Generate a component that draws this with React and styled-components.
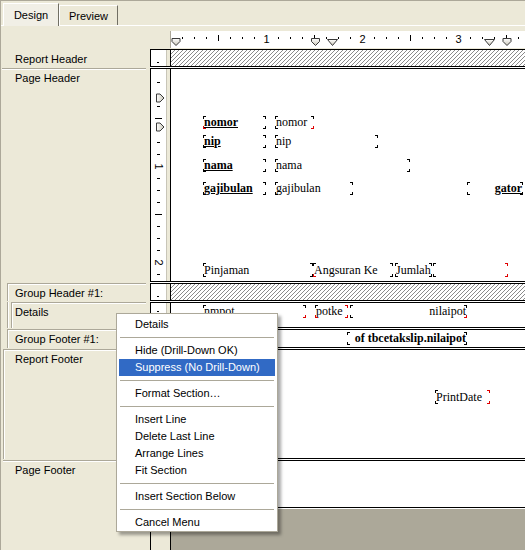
import React from 'react';
import styled, { createGlobalStyle } from 'styled-components';

const BEIGE = '#ece9d8';
const EDGE = '#aca899';
const DARK = '#716f64';

const GlobalStyle = createGlobalStyle`
  html, body { margin: 0; padding: 0; background: ${BEIGE}; }
  body { font-family: "Liberation Sans", Arial, sans-serif; font-size: 11px; color: #000; }
`;

/** window + tabs **/
const Window = styled.div`
  position: relative;
  box-sizing: border-box;
  width: 525px;
  height: 550px;
  overflow: hidden;
  background: ${BEIGE};
  border-left: 1px solid ${EDGE};
  display: flex;
  flex-direction: column;
`;

const TabStrip = styled.div`
  display: flex;
  align-items: flex-end;
  height: 24px;
  padding-left: 2px;
  border-top: 1px solid ${EDGE};
  border-bottom: 1px solid #fff;
`;

const Tab = styled.div`
  box-sizing: border-box;
  width: ${({ $w }) => $w}px;
  height: ${({ $active }) => ($active ? 23 : 20)}px;
  margin-bottom: ${({ $active }) => ($active ? -1 : 0)}px;
  display: flex;
  align-items: center;
  justify-content: center;
  background: ${({ $active }) => ($active ? '#f1efe6' : BEIGE)};
  border-left: 1px solid #fff;
  border-top: 1px solid #fff;
  border-right: 1px solid ${DARK};
  position: relative;
  z-index: 1;
`;

/** designer **/
const Designer = styled.div`
  flex: 1;
  display: flex;
  flex-direction: column;
`;

const RulerRow = styled.div`
  display: flex;
  height: 23px;
  padding-top: 5px;
  box-sizing: border-box;
`;

const Spacer = styled.div`
  flex: none;
  width: ${({ $w }) => $w}px;
`;

const HRuler = styled.div`
  flex: 1;
  height: 17px;
  background: #fff;
  border-left: 1px solid ${EDGE};
  svg { display: block; }
`;

const Row = styled.div`
  display: flex;
  flex: none;
  height: ${({ $h }) => $h}px;
  margin-top: ${({ $first }) => ($first ? 0 : 1)}px;
`;

const Label = styled.div`
  flex: none;
  width: 149px;
  display: flex;
  flex-direction: column;
`;

const LabelBox = styled.div`
  flex: 1;
  margin-left: ${({ $ml }) => $ml || 0}px;
  margin-right: ${({ $mr }) => ($mr === undefined ? 4 : $mr)}px;
  padding-left: ${({ $pl }) => $pl || 0}px;
  padding-top: ${({ $pt }) => ($pt === undefined ? 3 : $pt)}px;
  border-top: ${({ $top }) => ($top ? `1px solid ${EDGE}` : 'none')};
  border-left: ${({ $left }) => ($left ? `1px solid ${EDGE}` : 'none')};
  box-shadow: ${({ $top, $left }) =>
    [$top && 'inset 0 1px 0 #fff', $left && 'inset 1px 0 0 #fff'].filter(Boolean).join(', ') || 'none'};
  line-height: 13px;
  white-space: nowrap;
  display: flex;
  flex-direction: column;
`;

const Band = styled.div`
  flex: 1;
  display: flex;
  box-sizing: border-box;
  border: 1px solid #000;
  border-right: none;
  box-shadow: ${({ $first }) => ($first ? 'none' : '0 -1px 0 #fff')};
`;

const RulerBox = styled.div`
  flex: none;
  width: 15px;
  background: #fff;
  border-right: 1px solid #c8c5b8;
  position: relative;
  svg { display: block; }
  &::after {
    content: '';
    display: ${({ $markY }) => ($markY === undefined ? 'none' : 'block')};
    position: absolute;
    left: 6px;
    top: ${({ $markY }) => $markY}px;
    width: 2px;
    height: 1px;
    background: #000;
  }
`;

const Gap = styled.div`
  flex: none;
  width: 3px;
  background: ${BEIGE};
`;

const Canvas = styled.div`
  flex: 1;
  position: relative;
  overflow: hidden;
  border-left: 1px solid #000;
  background: ${({ $hatch }) =>
    $hatch ? 'linear-gradient(135deg, #fff 0 38%, #8a8a8a 38% 62%, #fff 62% 100%)' : '#fff'};
  background-size: 4px 4px;
`;

const BottomFill = styled.div`
  flex: 1;
  display: flex;
  margin-top: 1px;
`;

const BottomBand = styled.div`
  flex: 1;
  display: flex;
  border-left: 1px solid #000;
  box-shadow: 0 -1px 0 #fff;
`;

const GrayArea = styled.div`
  flex: 1;
  background: ${EDGE};
  border-left: 1px solid #000;
`;

/** report fields **/
const Field = styled.div`
  position: absolute;
  left: ${({ $x }) => $x}px;
  top: ${({ $y }) => $y}px;
  width: ${({ $w }) => $w}px;
  height: ${({ $h }) => $h}px;
  overflow: hidden;
  display: flex;
  justify-content: ${({ $right }) => ($right ? 'flex-end' : 'flex-start')};
  font-family: "Liberation Serif", "Times New Roman", serif;
  font-size: 12px;
  line-height: ${({ $h }) => $h}px;
  font-weight: ${({ $bold }) => ($bold ? 700 : 400)};
  text-decoration: ${({ $ul }) => ($ul ? 'underline' : 'none')};
  white-space: nowrap;
`;

const FieldText = styled.span`
  flex: none;
  padding: 0 1px;
`;

const cornerRules = {
  tl: 'top:0;left:0;border-top-width:1px;border-left-width:1px;',
  tr: 'top:0;right:0;border-top-width:1px;border-right-width:1px;',
  bl: 'bottom:0;left:0;border-bottom-width:1px;border-left-width:1px;',
  br: 'bottom:0;right:0;border-bottom-width:1px;border-right-width:1px;',
};

const Corner = styled.span`
  position: absolute;
  box-sizing: border-box;
  width: 3px;
  height: 3px;
  border: 0 solid ${({ $red }) => ($red ? '#e00000' : '#000')};
  ${({ $pos }) => cornerRules[$pos]}
`;

function FieldBox({ x, y, w, h = 13, bold, ul, right, red = '', children }) {
  return (
    <Field $x={x} $y={y} $w={w} $h={h} $bold={bold} $ul={ul} $right={right}>
      {children && <FieldText>{children}</FieldText>}
      {['tl', 'tr', 'bl', 'br'].map((p) => (
        <Corner key={p} $pos={p} $red={red.includes(p)} />
      ))}
    </Field>
  );
}

/** context menu **/
const Menu = styled.div`
  position: absolute;
  left: 115px;
  top: 313px;
  width: 162px;
  box-sizing: border-box;
  padding: 2px 2px 0;
  background: #fff;
  border: 1px solid ${EDGE};
  box-shadow: 3px 3px 3px rgba(0, 0, 0, 0.35);
  z-index: 5;
`;

const MenuItem = styled.div`
  height: 17px;
  line-height: 17px;
  padding-left: 16px;
  white-space: nowrap;
  color: ${({ $active }) => ($active ? '#fff' : '#000')};
  background: ${({ $active }) => ($active ? '#316ac5' : 'transparent')};
`;

const MenuSep = styled.div`
  height: 9px;
  display: flex;
  align-items: center;
  padding: 0 1px;
  &::after {
    content: '';
    flex: 1;
    height: 1px;
    background: ${EDGE};
  }
`;

/** rulers **/
function DownMarker({ x, kind }) {
  const d =
    kind === 'tri'
      ? 'M0.5,1.5 H10.5 L5.5,7.5 Z'
      : 'M0.5,0.5 H8.5 V3.5 L4.5,7.5 L0.5,3.5 Z';
  const w = kind === 'tri' ? 11 : 9;
  return (
    <path
      d={d}
      transform={`translate(${x - w / 2} 7)`}
      fill="url(#mk)"
      stroke="#3a3a3a"
      strokeWidth="1"
    />
  );
}

function TopRuler() {
  const marks = [];
  for (let k = 1; k < 30; k++) {
    const x = 12 * k - 1 + 0.5;
    if (k % 8 === 0) {
      marks.push(
        <text key={k} x={x} y={11.5} textAnchor="middle" fontSize="11" fontFamily="Liberation Sans, Arial, sans-serif">
          {k / 8}
        </text>
      );
    } else if (k % 4 === 0) {
      marks.push(<line key={k} x1={x} x2={x} y1={4} y2={10} stroke="#000" />);
    } else {
      marks.push(<line key={k} x1={x} x2={x} y1={6} y2={8} stroke="#000" />);
    }
  }
  return (
    <svg width="354" height="17">
      <defs>
        <linearGradient id="mk" x1="0" y1="0" x2="0" y2="1">
          <stop offset="0" stopColor="#ffffff" />
          <stop offset="1" stopColor="#c9c6b8" />
        </linearGradient>
      </defs>
      {marks}
      <DownMarker x={5} />
      <DownMarker x={144.5} />
      <DownMarker x={161.5} kind="tri" />
      <DownMarker x={318.5} kind="tri" />
      <DownMarker x={336} />
    </svg>
  );
}

function RightMarker({ y }) {
  return (
    <path
      d="M0.5,0.5 H4 L8,4.5 L4,8.5 H0.5 Z"
      transform={`translate(5 ${y - 4.5})`}
      fill="url(#mkv)"
      stroke="#3a3a3a"
    />
  );
}

function SideRuler() {
  const marks = [];
  for (let k = 1; k <= 17; k++) {
    const y = 1 + 12 * k + 0.5;
    if (k % 8 === 0) {
      marks.push(
        <text
          key={k}
          transform={`translate(7.5 ${y}) rotate(90)`}
          textAnchor="middle"
          dominantBaseline="central"
          fontSize="11"
          fontFamily="Liberation Sans, Arial, sans-serif"
        >
          {k / 8}
        </text>
      );
    } else if (k % 4 === 0) {
      marks.push(<line key={k} x1={4} x2={11} y1={y} y2={y} stroke="#000" />);
    } else {
      marks.push(<line key={k} x1={6} x2={9} y1={y} y2={y} stroke="#000" />);
    }
  }
  return (
    <svg width="15" height="212">
      <defs>
        <linearGradient id="mkv" x1="0" y1="0" x2="1" y2="0">
          <stop offset="0" stopColor="#ffffff" />
          <stop offset="1" stopColor="#c9c6b8" />
        </linearGradient>
      </defs>
      {marks}
      <RightMarker y={29} />
      <RightMarker y={58} />
    </svg>
  );
}

function Section({ h, first, hatch, markY, ruler, label, children }) {
  return (
    <Row $h={h} $first={first}>
      <Label>{label}</Label>
      <Band $first={first}>
        <RulerBox $markY={markY}>{ruler}</RulerBox>
        <Gap />
        <Canvas $hatch={hatch}>{children}</Canvas>
      </Band>
    </Row>
  );
}

const menuItems = [
  'Details',
  '-',
  'Hide (Drill-Down OK)',
  'Suppress (No Drill-Down)',
  '-',
  'Format Section…',
  '-',
  'Insert Line',
  'Delete Last Line',
  'Arrange Lines',
  'Fit Section',
  '-',
  'Insert Section Below',
  '-',
  'Cancel Menu',
];

export default function App() {
  return (
    <>
      <GlobalStyle />
      <Window>
        <TabStrip>
          <Tab $active $w={56}>Design</Tab>
          <Tab $w={59}>Preview</Tab>
        </TabStrip>

        <Designer>
          <RulerRow>
            <Spacer $w={169} />
            <HRuler>
              <TopRuler />
            </HRuler>
          </RulerRow>

          <Section
            h={18}
            first
            hatch
            markY={12}
            label={<LabelBox $pl={14} $pt={4}>Report Header</LabelBox>}
          />

          <Section
            h={214}
            ruler={<SideRuler />}
            label={<LabelBox $ml={1} $top $pl={13}>Page Header</LabelBox>}
          >
            <FieldBox x={32} y={47} w={63} bold ul red="bl">nomor</FieldBox>
            <FieldBox x={104} y={47} w={39} red="br">nomor</FieldBox>
            <FieldBox x={32} y={66} w={63} bold ul>nip</FieldBox>
            <FieldBox x={104} y={66} w={103}>nip</FieldBox>
            <FieldBox x={32} y={90} w={63} bold ul>nama</FieldBox>
            <FieldBox x={104} y={90} w={135}>nama</FieldBox>
            <FieldBox x={32} y={113} w={63} bold ul>gajibulan</FieldBox>
            <FieldBox x={104} y={113} w={78}>gajibulan</FieldBox>
            <FieldBox x={296} y={113} w={56} bold ul right>gator</FieldBox>

            <FieldBox x={32} y={194} w={110} h={14}>Pinjaman</FieldBox>
            <FieldBox x={142} y={194} w={80} h={14} red="bl">Angsuran Ke</FieldBox>
            <FieldBox x={224} y={194} w={37} h={14}>Jumlah</FieldBox>
            <FieldBox x={262} y={194} w={75} h={14} red="tr br" />
          </Section>

          <Section
            h={18}
            hatch
            markY={12}
            label={<LabelBox $ml={6} $top $left $pl={7}>Group Header #1:</LabelBox>}
          />

          <Section
            h={26}
            markY={8}
            label={
              <LabelBox $ml={6} $left $pl={0} $pt={0} $mr={4}>
                <LabelBox $ml={3} $top $left $pl={3} $mr={0}>Details</LabelBox>
              </LabelBox>
            }
          >
            <FieldBox x={32} y={2} w={103} red="br">nmpot</FieldBox>
            <FieldBox x={144} y={2} w={33} red="bl tr br">potke</FieldBox>
            <FieldBox x={179} y={2} w={117} right red="br">nilaipot</FieldBox>
          </Section>

          <Section
            h={19}
            label={<LabelBox $ml={6} $top $left $pl={7}>Group Footer #1:</LabelBox>}
          >
            <FieldBox x={176} y={2} w={120} bold right>of tbcetakslip.nilaipot</FieldBox>
          </Section>

          <Section
            h={110}
            label={<LabelBox $ml={2} $top $left $pl={11}>Report Footer</LabelBox>}
          >
            <FieldBox x={264} y={40} w={55} h={14} red="tr br">PrintDate</FieldBox>
          </Section>

          <Section
            h={48}
            label={<LabelBox $ml={2} $top $pl={12}>Page Footer</LabelBox>}
          />

          <BottomFill>
            <Spacer $w={149} />
            <BottomBand>
              <Spacer $w={19} />
              <GrayArea />
            </BottomBand>
          </BottomFill>
        </Designer>

        <Menu>
          {menuItems.map((item, i) =>
            item === '-' ? (
              <MenuSep key={i} />
            ) : (
              <MenuItem key={i} $active={item.startsWith('Suppress')}>
                {item}
              </MenuItem>
            )
          )}
        </Menu>
      </Window>
    </>
  );
}
